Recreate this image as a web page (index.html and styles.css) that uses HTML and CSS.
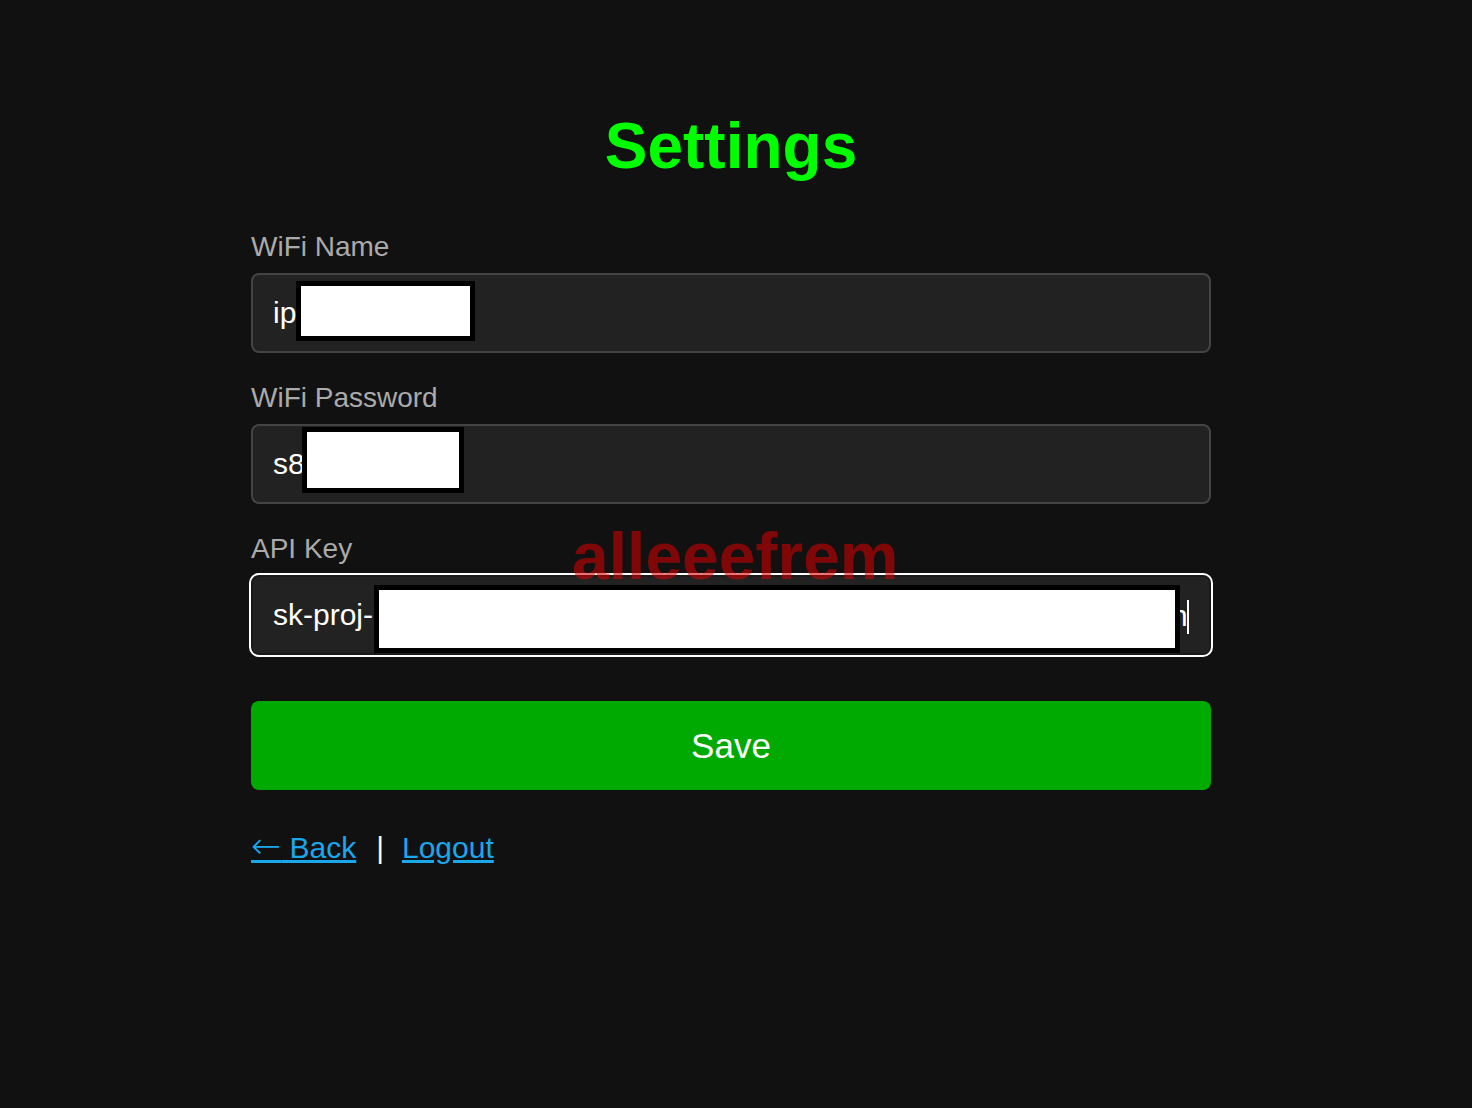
FILE: index.html
```html
<!DOCTYPE html>
<html lang="en">
<head>
<meta charset="utf-8">
<title>Settings</title>
<link rel="stylesheet" href="styles.css">
</head>
<body>
<div class="page">
  <h1 class="title">Settings</h1>
  <form class="form">
    <div class="field">
      <label class="label" for="ssid">WiFi Name</label>
      <div class="input-wrap">
        <input class="input" id="ssid" type="text" value="ip">
        <span class="redact redact-1"></span>
      </div>
    </div>
    <div class="field">
      <label class="label" for="pass">WiFi Password</label>
      <div class="input-wrap">
        <input class="input" id="pass" type="text" value="s8">
        <span class="redact redact-2"></span>
      </div>
    </div>
    <div class="field">
      <label class="label" for="key">API Key</label>
      <div class="input-wrap">
        <input class="input input-focused" id="key" type="text" value="sk-proj-">
        <span class="tail">n</span>
        <span class="caret"></span>
        <span class="redact redact-3"></span>
      </div>
    </div>
    <button class="save" type="button">Save</button>
  </form>
  <div class="links">
    <a class="link" href="#"><span class="arrow">&larr;</span> Back</a><span class="sep">|</span><a class="link" href="#">Logout</a>
  </div>
  <div class="watermark">alleeefrem</div>
</div>
</body>
</html>
```

FILE: styles.css
```css
html, body {
  margin: 0;
  background: #111111;
}
body {
  padding-right: 10px;
  font-family: "Liberation Sans", Arial, sans-serif;
  color: #ffffff;
}
.page {
  position: relative;
  width: 960px;
  margin: 0 auto;
  padding-top: 110px;
}
.title {
  margin: 0 0 49px;
  font-size: 64px;
  line-height: 72px;
  font-weight: 700;
  color: #00ff00;
  text-align: center;
}
.form {
  display: flex;
  flex-direction: column;
  gap: 29px;
  margin: 0;
}
.field {
  display: flex;
  flex-direction: column;
}
.label {
  font-size: 28px;
  line-height: 32px;
  color: #aaaaaa;
  margin-bottom: 10px;
}
.input-wrap {
  position: relative;
}
.input {
  display: block;
  box-sizing: border-box;
  width: 100%;
  height: 80px;
  padding: 0 20px;
  background: #222222;
  border: 2px solid #444444;
  border-radius: 8px;
  color: #ffffff;
  font-family: "Liberation Sans", Arial, sans-serif;
  font-size: 30px;
  outline: none;
}
.input-focused {
  border-color: #1a1a1a;
  outline: 2px solid #ffffff;
  outline-offset: 0;
}
.redact {
  position: absolute;
  box-sizing: border-box;
  background: #ffffff;
  border: 5px solid #000000;
  z-index: 2;
}
.redact-1 {
  left: 45px;
  top: 8px;
  width: 179px;
  height: 60px;
}
.redact-2 {
  left: 51px;
  top: 3px;
  width: 162px;
  height: 66px;
}
.redact-3 {
  left: 123px;
  top: 10px;
  width: 806px;
  height: 68px;
}
.tail {
  position: absolute;
  left: 920px;
  top: 1px;
  line-height: 80px;
  font-size: 30px;
  color: #ffffff;
  z-index: 1;
}
.caret {
  position: absolute;
  left: 936px;
  top: 25px;
  width: 2px;
  height: 34px;
  background: #ffffff;
  z-index: 1;
}
.save {
  margin-top: 17px;
  height: 89px;
  width: 100%;
  border: none;
  border-radius: 8px;
  background: #00aa00;
  color: #ffffff;
  font-family: "Liberation Sans", Arial, sans-serif;
  font-size: 35px;
  cursor: pointer;
}
.links {
  margin-top: 39px;
  font-size: 30px;
  line-height: 34px;
  display: flex;
  align-items: baseline;
}
.link {
  color: #1aa7ec;
  text-decoration: underline;
}
.arrow {
  font-family: "DejaVu Sans", sans-serif;
  font-size: 36px;
  font-weight: 200;
}
.sep {
  color: #ffffff;
  margin: 0 18px 0 20px;
}
.watermark {
  position: absolute;
  left: 321px;
  top: 523px;
  font-size: 66px;
  line-height: 66px;
  font-weight: 700;
  color: rgba(220, 0, 0, 0.55);
  z-index: 5;
  pointer-events: none;
}
```
